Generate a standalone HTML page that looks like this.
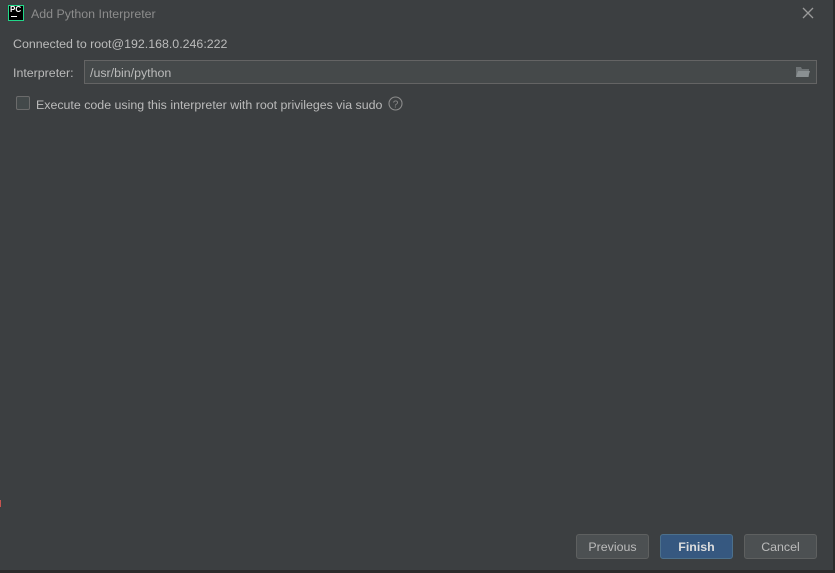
<!DOCTYPE html>
<html><head><meta charset="utf-8"><style>
*{margin:0;padding:0;box-sizing:border-box}
body{width:835px;height:573px;background:#3c3f41;position:relative;overflow:hidden;font-family:"Liberation Sans","DejaVu Sans",sans-serif;font-size:12.4px;color:#bbbbbb}
.abs{position:absolute;white-space:nowrap}
.btn{position:absolute;top:534px;height:25px;width:73px;border:1px solid #5e6060;border-radius:3px;background:#4c5052;color:#bbbbbb;text-align:center;line-height:25px;font-size:12.4px}
</style></head><body>
<div class="abs" style="left:833px;top:0;width:2px;height:573px;background:#2b2b2b"></div>
<div class="abs" style="left:0;top:570px;width:835px;height:3px;background:#2b2b2b"></div>
<div class="abs" style="left:0;top:500px;width:1px;height:7px;background:#c75450"></div>
<div class="abs" style="left:8px;top:5px;width:16px;height:16px;background:#000;border:1px solid #21d789"></div>
<div class="abs" style="left:10px;top:5px;font-size:8px;font-weight:bold;color:#fff;line-height:10px">PC</div>
<div class="abs" style="left:11px;top:16px;width:6px;height:1px;background:#fff"></div>
<div class="abs" style="left:31px;top:7px;color:#8c8c8c">Add Python Interpreter</div>
<svg class="abs" style="left:802px;top:7px" width="12" height="12"><path d="M1 1L11 11M11 1L1 11" stroke="#9a9a9a" stroke-width="1.3"/></svg>
<div class="abs" style="left:13px;top:37px">Connected to root@192.168.0.246:222</div>
<div class="abs" style="left:13px;top:66px">Interpreter:</div>
<div class="abs" style="left:84px;top:60px;width:733px;height:24px;border:1px solid #646464;background:#45494a"></div>
<div class="abs" style="left:90px;top:66px">/usr/bin/python</div>
<svg class="abs" style="left:795px;top:66px" width="16" height="12"><path d="M1 1h5l1 2h7v8H1z" fill="#6e7375"/><path d="M3 5h12l-2 6H1z" fill="#8a9092"/></svg>
<div class="abs" style="left:16px;top:96px;width:14px;height:14px;border:1px solid #6b6b6b;border-radius:2px;background:#43494a"></div>
<div class="abs" style="left:36px;top:98px">Execute code using this interpreter with root privileges via sudo</div>
<svg class="abs" style="left:388px;top:96px" width="15" height="15"><circle cx="7.5" cy="7.5" r="6.5" fill="none" stroke="#8c8c8c" stroke-width="1.1"/><text x="7.5" y="11.5" font-size="10" text-anchor="middle" fill="#8c8c8c" font-family="Liberation Sans">?</text></svg>
<div class="btn" style="left:576px">Previous</div>
<div class="btn" style="left:660px;background:#365880;border-color:#4c708c;color:#dddddd;font-weight:bold">Finish</div>
<div class="btn" style="left:744px">Cancel</div>
</body></html>
